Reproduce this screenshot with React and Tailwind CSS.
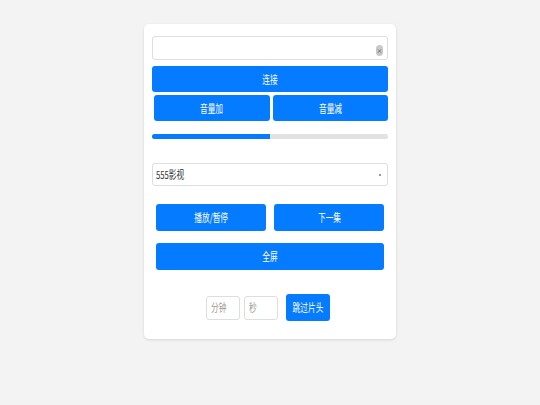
import React from "react";

const font = { fontFamily: '"Noto Sans CJK SC", "Noto Sans", sans-serif' };

function T({ children }) {
  return <span className="inline-block origin-center scale-x-[0.7] text-[11px] leading-none">{children}</span>;
}

function Btn({ children, className = "" }) {
  return (
    <button className={`flex items-center justify-center rounded-[3px] bg-[#057bff] text-white ${className}`}>
      <T>{children}</T>
    </button>
  );
}

export default function App() {
  return (
    <div className="min-h-[405px] w-full bg-[#f3f3f3] pt-[24px]" style={font}>
      <div className="mx-auto flex w-[252px] flex-col rounded-[5px] bg-white px-[8px] pb-[18px] pt-[12px] shadow-[0_1px_3px_rgba(0,0,0,0.12)]">
        <div className="flex h-[24px] items-end justify-end rounded-[3px] border border-[#dedede] pb-[3px] pr-[4px]">
          <div className="flex h-[11px] w-[7px] items-center justify-center rounded-full bg-[#c9c9c9] text-[6px] leading-none text-[#444]">×</div>
        </div>
        <Btn className="mt-[6px] h-[26px] w-full">连接</Btn>
        <div className="mt-[3px] flex h-[26px] gap-[3px] pl-[2px]">
          <Btn className="h-full flex-1">音量加</Btn>
          <Btn className="h-full flex-1">音量减</Btn>
        </div>
        <div className="mt-[13px] h-[5px] w-full overflow-hidden rounded-full bg-[#e2e2e2]">
          <div className="h-full w-1/2 bg-[#057bff]" />
        </div>
        <div className="mt-[24px] flex h-[23px] items-center justify-between rounded-[3px] border border-[#dedede] pl-[3px] pr-[6px] text-[#333]">
          <span className="inline-block origin-left scale-x-[0.7] text-[11px] leading-none">555影视</span>
          <span className="h-[2px] w-[2px] bg-[#999]" />
        </div>
        <div className="mt-[18px] flex h-[27px] gap-[8px] px-[4px]">
          <Btn className="h-full flex-1">播放/暂停</Btn>
          <Btn className="h-full flex-1">下一集</Btn>
        </div>
        <div className="mt-[12px] px-[4px]">
          <Btn className="h-[27px] w-full">全屏</Btn>
        </div>
        <div className="mt-[24px] flex items-center justify-center gap-[4px] pr-[4px]">
          <div className="flex h-[24px] w-[34px] items-center rounded-[3px] border border-[#dedede] pl-[4px] text-[#999]">
            <span className="inline-block origin-left scale-x-[0.7] text-[11px] leading-none">分钟</span>
          </div>
          <div className="flex h-[24px] w-[34px] items-center rounded-[3px] border border-[#dedede] pl-[4px] text-[#999]">
            <span className="inline-block origin-left scale-x-[0.7] text-[11px] leading-none">秒</span>
          </div>
          <Btn className="ml-[4px] h-[27px] w-[44px]">跳过片头</Btn>
        </div>
      </div>
    </div>
  );
}
